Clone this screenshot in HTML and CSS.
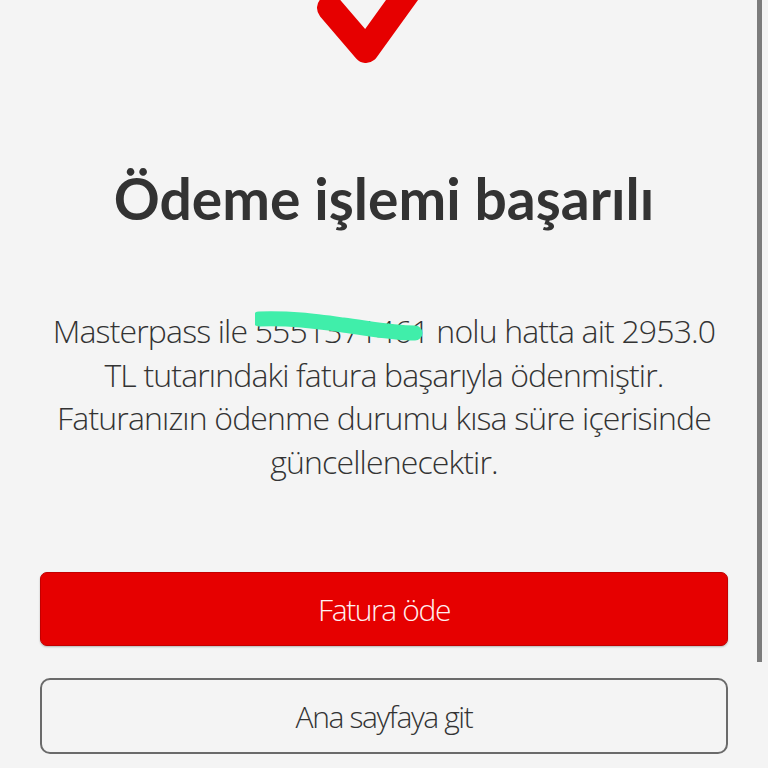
FILE: index.html
```html
<!DOCTYPE html>
<html lang="tr">
<head>
  <meta charset="UTF-8" />
  <title>Ödeme işlemi başarılı</title>
  <link rel="stylesheet" href="styles.css">
</head>
<body>

<div class="page">
  <div class="check">
    <svg width="140" height="66" viewBox="0 0 140 66">
      <path d="M16 8 L52 50 L106 -25" fill="none" stroke="#e60000" stroke-width="26" stroke-linecap="round" stroke-linejoin="round" />
    </svg>
  </div>

  <h1 class="title">Ödeme işlemi başarılı</h1>

  <p class="info">
    Masterpass ile <span class="msisdn">5551371461<svg class="scribble" width="180" height="44" viewBox="0 0 180 44"><path d="M4 10 C 36 9, 58 12, 88 16 S 138 24, 160 24" fill="none" stroke="#40eeaa" stroke-width="15" stroke-linecap="round" /></svg></span> nolu hatta ait 2953.0<br>
    TL tutarındaki fatura başarıyla ödenmiştir.<br>
    Faturanızın ödenme durumu kısa süre içerisinde<br>
    güncellenecektir.
  </p>

  <div class="actions">
    <button class="btn btn-primary" type="button">Fatura öde</button>
    <button class="btn btn-outline" type="button">Ana sayfaya git</button>
  </div>
</div>

<div class="scrollbar"></div>

</body>
</html>
```

FILE: styles.css
```css
html, body { margin: 0; padding: 0; }
body {
  background: #f4f4f4;
  font-family: "Open Sans", "DejaVu Sans", sans-serif;
  color: #333;
  height: 768px;
  overflow: hidden;
}
.page { padding: 0 40px; }
.check { display: flex; justify-content: center; height: 66px; }
.check svg { display: block; }

.title {
  margin: 102px 0 0;
  text-align: center;
  font-family: Lato, "Open Sans", sans-serif;
  font-weight: 700;
  font-size: 57px;
  line-height: 60px;
  color: #333;
}

.info {
  margin: 81px -20px 0;
  text-align: center;
  font-weight: 300;
  font-size: 32px;
  letter-spacing: -0.85px;
  line-height: 43.5px;
  white-space: nowrap;
}
.msisdn { position: relative; }
.scribble { position: absolute; left: 0; top: 0; }

.actions { margin-top: 89px; display: flex; flex-direction: column; gap: 32px; }
.btn {
  width: 100%; height: 74px;
  display: flex; align-items: center; justify-content: center;
  font-family: "Open Sans", sans-serif; font-weight: 300; font-size: 30px;
  letter-spacing: -1.4px;
  border-radius: 7px; cursor: pointer;
}
.btn-primary {
  background: #e60000; color: #fff0f0;
  border: 1px solid #c20000;
  box-shadow: 0 1px 2px rgba(0, 0, 0, 0.25);
}
.btn-outline {
  background: #f4f4f4; color: #333;
  border: 2px solid #6a6a6a;
  height: 76px; border-radius: 10px;
}

.scrollbar {
  position: absolute; top: 0; right: 6px;
  width: 5px; height: 662px;
  background: #7c7c7c;
}
```
